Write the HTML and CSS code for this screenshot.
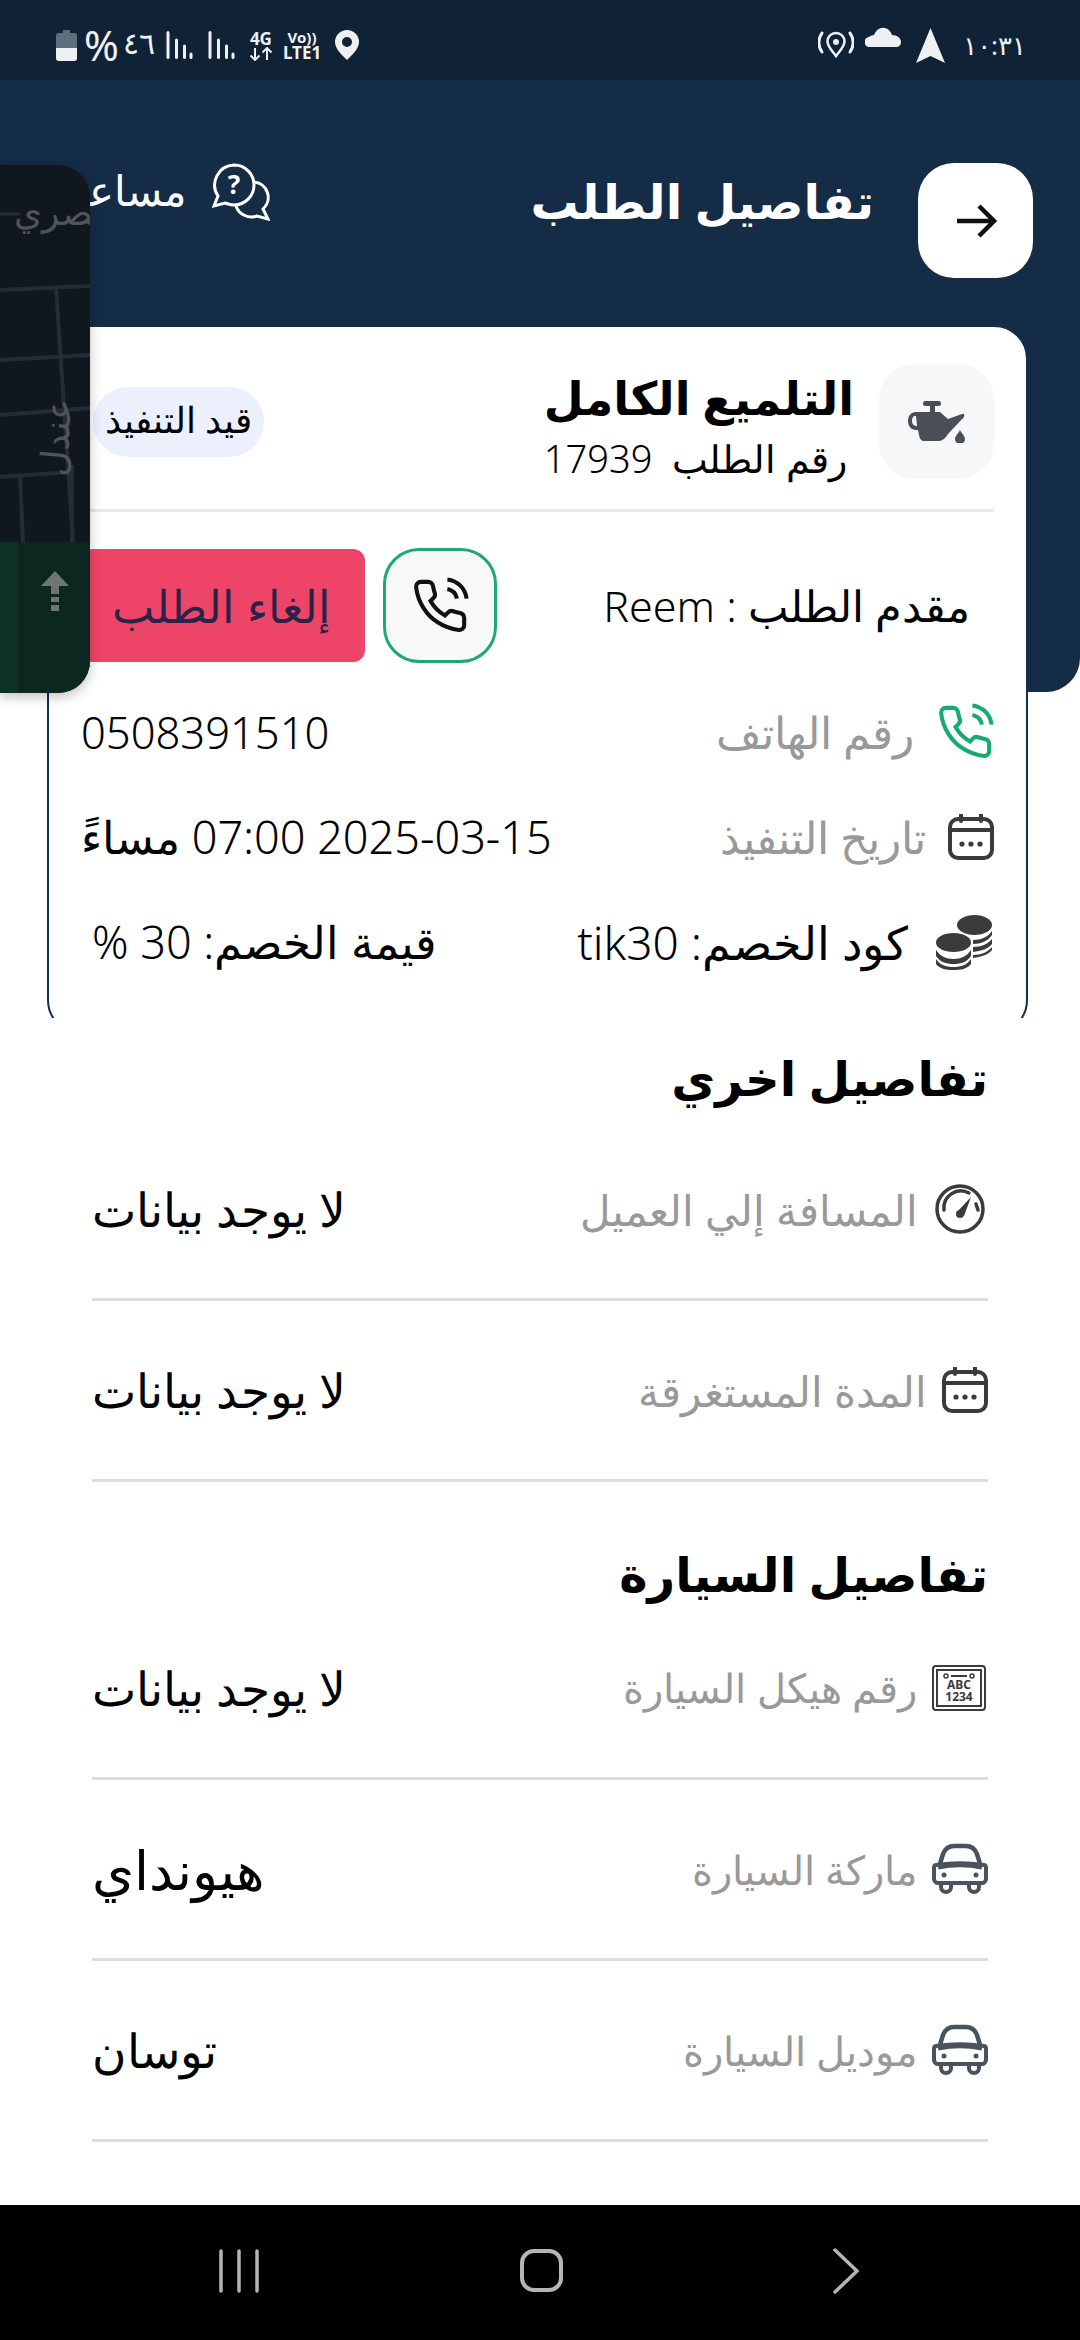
FILE: index.html
```html
<!DOCTYPE html>
<html lang="ar" dir="rtl">
<head>
    <meta charset="utf-8">
    <title>تفاصيل الطلب</title>
    <link rel="stylesheet" href="styles.css">
</head>
<body>
    <svg class="defs" width="0" height="0">
        <symbol id="calendar" viewBox="0 0 46 46">
            <path d="M13 1v6M33 1v6" fill="none" stroke="currentColor" stroke-width="4" stroke-linecap="round"/>
            <rect x="2" y="5" width="42" height="39" rx="8" fill="none" stroke="currentColor" stroke-width="4"/>
            <path d="M2 16h42" stroke="currentColor" stroke-width="4"/>
            <circle cx="14" cy="30" r="2.6" fill="currentColor"/>
            <circle cx="23" cy="30" r="2.6" fill="currentColor"/>
            <circle cx="32" cy="30" r="2.6" fill="currentColor"/>
        </symbol>
        <symbol id="car" viewBox="0 0 56 52">
            <path d="M7 24l4-13c2-5 6-8 11-8h12c5 0 9 3 11 8l4 13" fill="none" stroke="currentColor" stroke-width="4.5"/>
            <path d="M4 22c-1 0-2 1-2 3v11c0 2 2 4 4 4h44c2 0 4-2 4-4V25c0-2-1-3-2-3-14-2-34-2-48 0z" fill="none" stroke="currentColor" stroke-width="4"/>
            <path d="M6 24c14-3 30-3 44 0" fill="none" stroke="currentColor" stroke-width="5"/>
            <path d="M9 40v4a5 5 0 0 0 10 0v-4M37 40v4a5 5 0 0 0 10 0v-4" fill="none" stroke="currentColor" stroke-width="4"/>
            <circle cx="12" cy="32" r="2.5" fill="currentColor"/>
            <circle cx="44" cy="32" r="2.5" fill="currentColor"/>
        </symbol>
        <symbol id="signal" viewBox="0 0 27 28">
            <path d="M2 1.500v25M10.500 9v17.500M18.500 15v11.500M25 23v3.500" fill="none" stroke="currentColor" stroke-width="3" stroke-linecap="round"/>
        </symbol>
    </svg>

    <div class="screen">
        <div class="status-bar" dir="ltr">
            <div class="status-group">
                <svg class="st-battery" width="21" height="31" viewBox="0 0 21 31">
                    <path d="M7 0h7v3h4a3 3 0 0 1 3 3v22a3 3 0 0 1-3 3H3a3 3 0 0 1-3-3V6a3 3 0 0 1 3-3h4z" fill="#5f6e7c"/>
                    <path d="M0 18h21v10a3 3 0 0 1-3 3H3a3 3 0 0 1-3-3z" fill="#eef0f2"/>
                </svg>
                <span class="st-percent">%</span>
                <span class="st-level">٤٦</span>
                <svg class="st-signal" width="27" height="28"><use href="#signal"/></svg>
                <svg class="st-signal st-signal-two" width="27" height="28"><use href="#signal"/></svg>
                <span class="st-net">
                    <span class="st-net-top">4G</span>
                    <svg width="24" height="14" viewBox="0 0 24 14"><path d="M6 1v12M1.500 8.500L6 13l4.500-4.500M18 13V1M13.500 5.500L18 1l4.500 4.500" fill="none" stroke="currentColor" stroke-width="2"/></svg>
                </span>
                <span class="st-volte">
                    <span class="st-volte-top">Vo))</span>
                    <span class="st-volte-bottom">LTE1</span>
                </span>
                <svg class="st-pin" width="24" height="30" viewBox="0 0 24 30">
                    <path fill-rule="evenodd" d="M12 0a12 12 0 0 1 12 12c0 7-7 13-12 18C7 25 0 19 0 12A12 12 0 0 1 12 0zm0 7a5 5 0 1 0 0 10 5 5 0 0 0 0-10z" fill="#eef0f2"/>
                </svg>
            </div>
            <div class="status-group">
                <svg width="36" height="28" viewBox="0 0 36 28">
                    <path d="M18 2a8.500 8.500 0 0 1 8.500 8.500c0 5-4.500 9-8.500 14.500-4-5.500-8.500-9.500-8.500-14.500A8.500 8.500 0 0 1 18 2z" fill="none" stroke="#eef0f2" stroke-width="2.500"/>
                    <circle cx="18" cy="11" r="3" fill="#eef0f2"/>
                    <path d="M4 2c-4 6-4 13 0 19M32 2c4 6 4 13 0 19" fill="none" stroke="#eef0f2" stroke-width="3" stroke-linecap="round"/>
                </svg>
                <svg class="st-cloud" width="36" height="20" viewBox="0 0 36 20">
                    <path d="M5 20a5 5 0 0 1-1-10c1-1 3-2 5-2 2-5 6-8 11-7 4 1 6 4 7 7 5 0 9 3 9 7 0 3-2 5-5 5z" fill="#eef0f2"/>
                </svg>
                <svg class="st-nav" width="29" height="35" viewBox="0 0 29 35">
                    <path d="M14.500 0L29 35 14.500 28 0 35z" fill="#eef0f2"/>
                </svg>
                <span class="st-time">١٠:٣١</span>
            </div>
        </div>

        <header class="top-header">
            <div class="back-btn">
                <svg width="42" height="36" viewBox="0 0 42 36"><path d="M2 18h36M24 3l15 15-15 15" fill="none" stroke="#111" stroke-width="4.500"/></svg>
            </div>
            <h1 class="page-title">تفاصيل الطلب</h1>
            <div class="help">
                <svg class="help-icon" width="58" height="58" viewBox="0 0 58 58">
                    <path d="M22 2a20 20 0 0 1 0 40c-3 0-6-1-9-2l-11 3 4-10A20 20 0 0 1 22 2z" fill="none" stroke="#fff" stroke-width="3"/>
                    <path d="M42 19a15.500 15.500 0 0 1 9 27l5 10-11-3c-8 3-18-1-21-10" fill="none" stroke="#fff" stroke-width="3"/>
                    <text x="22" y="31" class="help-mark">?</text>
                </svg>
                <span class="help-text">مساعدة</span>
            </div>
        </header>

        <div class="card-clip">
            <section class="card">
                <div class="service">
                    <div class="icon-box">
                        <svg width="58" height="42" viewBox="0 0 58 42" fill="#4a4f57">
                            <rect x="15" y="0" width="18" height="5" rx="2.500"/>
                            <rect x="22" y="4" width="5" height="8"/>
                            <path fill-rule="evenodd" d="M8 11H32L40 18 54 13Q57 12 56 16L40 33Q36 40 31 40H16Q12 40 11 34L10 29H8C3 29 0 25 0 20 0 15 3 11 8 11ZM7 15C5 15 4 17 4 20 4 23 6 25 9 25L8 15Z"/>
                            <path d="M52 29c2 4 5 6 5 9a5 5 0 0 1-10 0c0-3 3-5 5-9z"/>
                        </svg>
                    </div>
                    <div class="service-info">
                        <h2 class="service-name">التلميع الكامل</h2>
                        <p class="service-no">رقم الطلب&nbsp;&nbsp;17939</p>
                    </div>
                    <span class="badge">قيد التنفيذ</span>
                </div>

                <div class="requester">
                    <span class="requester-name">مقدم الطلب : Reem</span>
                    <div class="call-btn">
                        <svg width="58" height="58" viewBox="0 0 24 24" fill="none" stroke="#111" stroke-width="1.700">
                            <path d="M15.050 5A5 5 0 0 1 19 8.950M15.050 1A9 9 0 0 1 23 8.940m-1 7.980v3a2 2 0 0 1-2.180 2 19.790 19.790 0 0 1-8.630-3.070 19.500 19.500 0 0 1-6-6 19.790 19.790 0 0 1-3.070-8.670A2 2 0 0 1 4.110 2h3a2 2 0 0 1 2 1.720 12.840 12.840 0 0 0 .7 2.810 2 2 0 0 1-.45 2.110L8.090 9.910a16 16 0 0 0 6 6l1.270-1.270a2 2 0 0 1 2.110-.45 12.840 12.840 0 0 0 2.810.7A2 2 0 0 1 22 16.920z"/>
                        </svg>
                    </div>
                    <div class="cancel-btn">إلغاء الطلب</div>
                </div>

                <div class="info-row info-row-first">
                    <div class="info-label">
                        <svg width="58" height="58" viewBox="0 0 24 24" fill="none" stroke="#17ab6f" stroke-width="1.700">
                            <path d="M15.050 5A5 5 0 0 1 19 8.950M15.050 1A9 9 0 0 1 23 8.940m-1 7.980v3a2 2 0 0 1-2.180 2 19.790 19.790 0 0 1-8.630-3.070 19.500 19.500 0 0 1-6-6 19.790 19.790 0 0 1-3.070-8.670A2 2 0 0 1 4.110 2h3a2 2 0 0 1 2 1.720 12.840 12.840 0 0 0 .7 2.810 2 2 0 0 1-.45 2.110L8.090 9.910a16 16 0 0 0 6 6l1.270-1.270a2 2 0 0 1 2.110-.45 12.840 12.840 0 0 0 2.810.7A2 2 0 0 1 22 16.920z"/>
                        </svg>
                        <span class="label-text">رقم الهاتف</span>
                    </div>
                    <span class="value-text value-phone">0508391510</span>
                </div>
                <div class="info-row">
                    <div class="info-label">
                        <svg class="ic-dark" width="46" height="46"><use href="#calendar"/></svg>
                        <span class="label-text">تاريخ التنفيذ</span>
                    </div>
                    <span class="value-text">2025-03-15 07:00 مساءً</span>
                </div>
                <div class="info-row">
                    <div class="info-label">
                        <svg width="58" height="56" viewBox="0 0 58 56" fill="#3b3b3d">
                            <ellipse cx="38.500" cy="11" rx="17.500" ry="10"/>
                            <path d="M37 26C45 26 52 23 56 17V21C52 27 45 30 37 30ZM37 33C45 33 52 30 56 25V30C52 35 45 37 37 38ZM37 41C45 41 52 38 56 33V36C52 41 45 43 37 44Z"/>
                            <ellipse cx="17.500" cy="28.500" rx="17.500" ry="9.500"/>
                            <path d="M0 36C4 42 10 45 17.500 45S31 42 35 36V42C31 48 25 50 17.500 50S4 48 0 42ZM0 45C4 51 10 53 17.500 53S31 51 35 45V50C31 55 25 56 17.500 56S4 55 0 50Z"/>
                        </svg>
                        <span class="plain-text">كود الخصم: tik30</span>
                    </div>
                    <span class="value-text value-indent">قيمة الخصم: 30 %</span>
                </div>
            </section>
        </div>

        <main class="details">
            <h3 class="section-title">تفاصيل اخري</h3>
            <div class="detail-row">
                <div class="info-label">
                    <svg class="ic-dark ic-gauge" width="50" height="50" viewBox="0 0 50 50" fill="none" stroke="currentColor">
                        <circle cx="25" cy="25" r="23" stroke-width="3.500"/>
                        <path d="M9 26A17 17 0 0 1 34 9M41 20l2 6" stroke-width="3.500" stroke-linecap="round"/>
                        <path d="M22 28L36 13 29 32Z" fill="currentColor" stroke="none"/>
                        <circle cx="25" cy="30" r="4" fill="currentColor" stroke="none"/>
                    </svg>
                    <span class="label-text">المسافة إلي العميل</span>
                </div>
                <span class="detail-value">لا يوجد بيانات</span>
            </div>
            <div class="detail-row">
                <div class="info-label">
                    <svg class="ic-dark" width="46" height="46"><use href="#calendar"/></svg>
                    <span class="label-text">المدة المستغرقة</span>
                </div>
                <span class="detail-value">لا يوجد بيانات</span>
            </div>

            <h3 class="section-title section-car">تفاصيل السيارة</h3>
            <div class="detail-row row-chassis">
                <div class="info-label">
                    <svg class="ic-dark ic-plate" width="54" height="46" viewBox="0 0 54 46" fill="none" stroke="currentColor">
                        <rect x="1" y="1" width="52" height="44" rx="3" stroke-width="2"/>
                        <rect x="5" y="5" width="44" height="36" stroke-width="2"/>
                        <circle cx="14" cy="11" r="2" stroke-width="1.500"/>
                        <circle cx="40" cy="11" r="2" stroke-width="1.500"/>
                        <path d="M19 11h16" stroke-width="2"/>
                        <text x="27" y="24" class="plate-text">ABC</text>
                        <text x="27" y="36" class="plate-text">1234</text>
                    </svg>
                    <span class="label-text label-small">رقم هيكل السيارة</span>
                </div>
                <span class="detail-value">لا يوجد بيانات</span>
            </div>
            <div class="detail-row">
                <div class="info-label">
                    <svg class="ic-car" width="56" height="52"><use href="#car"/></svg>
                    <span class="label-text label-small">ماركة السيارة</span>
                </div>
                <span class="detail-value value-wide">هيونداي</span>
            </div>
            <div class="detail-row">
                <div class="info-label">
                    <svg class="ic-car" width="56" height="52"><use href="#car"/></svg>
                    <span class="label-text label-small">موديل السيارة</span>
                </div>
                <span class="detail-value">توسان</span>
            </div>
        </main>

        <nav class="nav-bar" dir="ltr">
            <svg width="42" height="44" viewBox="0 0 42 44"><path d="M3 2v40M21 2v40M39 2v40" stroke="#b5b5b5" stroke-width="3.500" stroke-linecap="round"/></svg>
            <div class="nav-home"></div>
            <svg width="26" height="46" viewBox="0 0 26 46"><path d="M2 2l22 21L2 44" fill="none" stroke="#b5b5b5" stroke-width="3.500" stroke-linecap="round"/></svg>
        </nav>

        <!-- floating map window on top of the page -->
        <aside class="map-window">
            <svg class="map-canvas" width="90" height="377" viewBox="0 0 90 377" fill="none" stroke="#262c35">
                <path d="M0 49h20" stroke-width="3"/>
                <path d="M0 125l90-4M0 195l90-5M0 250l90-7M0 312l70-5" stroke-width="4"/>
                <path d="M56 122l17 255M20 310l3 67M72 300v77" stroke-width="4"/>
                <text x="112" y="60" class="map-label">مصري</text>
                <text class="map-label" transform="translate(72 235) rotate(-85)">عندل</text>
            </svg>
            <div class="map-guide">
                <svg width="30" height="42" viewBox="0 0 30 42" fill="#6f7571">
                    <path d="M15 0l14 15h-10v8h-8v-8H1z"/>
                    <rect x="11" y="26" width="8" height="5"/>
                    <rect x="11" y="34" width="8" height="6"/>
                </svg>
            </div>
        </aside>
    </div>
</body>
</html>
```

FILE: styles.css
```css
* {
    box-sizing: border-box;
}
html, body {
    margin: 0;
    padding: 0;
}
body {
    width: 1080px;
    height: 2340px;
    overflow: hidden;
    background-color: #fff;
    font-family: "Noto Sans", "Open Sans", "DejaVu Sans", sans-serif;
    font-weight: 300;
    color: #000;
}
h1, h2, h3, p {
    margin: 0;
}
.defs {
    position: absolute;
}
.screen {
    position: relative;
    width: 1080px;
    height: 2340px;
    display: flex;
    flex-direction: column;
}

/* status bar */
.status-bar {
    height: 80px;
    padding: 10px 54px 0 56px;
    background-color: #102336;
    color: #eef0f2;
    font-weight: 400;
    display: flex;
    justify-content: space-between;
    align-items: center;
    flex-shrink: 0;
}
.status-group {
    display: flex;
    align-items: center;
}
.st-percent {
    margin-left: 7px;
    font-size: 42px;
    line-height: 44px;
}
.st-level {
    margin-left: 4px;
    width: 28px;
    font-size: 30px;
    line-height: 30px;
    margin-top: -4px;
}
.st-signal {
    margin-left: 15px;
}
.st-net {
    margin-left: 14px;
    display: flex;
    flex-direction: column;
    align-items: center;
    font-size: 17px;
    line-height: 17px;
    font-weight: 700;
}
.st-volte {
    margin-left: 10px;
    display: flex;
    flex-direction: column;
    align-items: center;
    font-weight: 700;
    line-height: 16px;
}
.st-volte-top {
    font-size: 15px;
}
.st-volte-bottom {
    font-size: 17px;
}
.st-pin {
    margin-left: 14px;
}
.st-cloud {
    margin-left: 11px;
    margin-top: -16px;
}
.st-nav {
    margin-left: 15px;
}
.st-time {
    margin-left: 18px;
    font-size: 26px;
    line-height: 30px;
    letter-spacing: 2px;
}

/* header */
.top-header {
    height: 612px;
    flex-shrink: 0;
    padding: 83px 47px 0 0;
    background-color: #152c47;
    border-bottom-right-radius: 34px;
    border-bottom-left-radius: 34px;
    color: #fff;
    display: flex;
    align-items: flex-start;
}
.back-btn {
    width: 115px;
    height: 115px;
    border-radius: 36px;
    background-color: #fff;
    display: flex;
    align-items: center;
    justify-content: center;
}
.page-title {
    margin-right: 44px;
    margin-top: 5px;
    font-size: 48px;
    line-height: 66px;
    font-weight: 700;
}
.help {
    margin-right: auto;
    width: 270px;
    display: flex;
    align-items: flex-start;
    gap: 25px;
    overflow: hidden;
}
.help-icon {
    flex-shrink: 0;
}
.help-mark {
    font-size: 26px;
    font-weight: 700;
    fill: #fff;
    text-anchor: middle;
}
.help-text {
    font-size: 42px;
    line-height: 54px;
    font-weight: 300;
    white-space: nowrap;
}

/* order card */
.card-clip {
    margin: -367px 52px 0 47px;
    height: 693px;
    overflow: hidden;
    flex-shrink: 0;
    position: relative;
}
.card {
    height: 709px;
    padding: 37px 32px 0;
    background-color: #fff;
    border: 2px solid #162e4b;
    border-radius: 34px;
}
.service {
    height: 148px;
    padding-bottom: 31px;
    border-bottom: 3px solid #e9e9e9;
    display: flex;
    align-items: flex-start;
}
.icon-box {
    width: 115px;
    height: 115px;
    border-radius: 36px;
    background-color: #f6f7f9;
    display: flex;
    align-items: center;
    justify-content: center;
    flex-shrink: 0;
}
.service-info {
    margin-right: 25px;
}
.service-name {
    font-size: 46px;
    line-height: 56px;
    font-weight: 700;
    margin-top: 5px;
}
.service-no {
    margin-top: 8px;
    margin-right: 7px;
    font-size: 38px;
    line-height: 50px;
}
.badge {
    margin: 23px auto 0 12px;
    height: 70px;
    width: 171px;
    border-radius: 35px;
    background-color: #ecf0fd;
    font-size: 36px;
    line-height: 66px;
    text-align: center;
    white-space: nowrap;
}
.requester {
    margin-top: 36px;
    height: 115px;
    padding-right: 24px;
    display: flex;
    align-items: center;
}
.requester-name {
    font-size: 43px;
    margin-left: auto;
}
.call-btn {
    width: 114px;
    height: 115px;
    border: 3px solid #1fa870;
    border-radius: 36px;
    background-color: #f6f8fa;
    display: flex;
    align-items: center;
    justify-content: center;
}
.cancel-btn {
    margin-right: 18px;
    width: 284px;
    height: 113px;
    border-radius: 12px;
    background-color: #ee4468;
    color: #2a2349;
    font-size: 45px;
    line-height: 113px;
    padding-right: 34px;
}
.info-row {
    height: 105px;
    display: flex;
    justify-content: space-between;
    align-items: center;
}
.info-row-first {
    margin-top: 16px;
}
.info-label {
    display: flex;
    align-items: center;
}
.label-text {
    margin-right: 22px;
    font-size: 43.5px;
    color: #999;
}
.plain-text {
    margin-right: 28px;
    font-size: 46px;
}
.value-text {
    font-size: 45px;
}
.value-phone {
    font-size: 43.5px;
}
.value-indent {
    margin-left: 11px;
}
.ic-dark {
    color: #3b3b3d;
}
.ic-car {
    color: #4a525c;
}

/* details */
.details {
    padding: 0 92px;
    flex: 1;
}
.section-title {
    margin-top: 24px;
    margin-bottom: 6px;
    font-size: 48px;
    line-height: 72px;
    font-weight: 700;
}
.section-car {
    margin-top: 56px;
    margin-bottom: 0;
}
.detail-row {
    height: 181px;
    border-bottom: 3px solid #ddd;
    display: flex;
    justify-content: space-between;
    align-items: center;
}
.row-chassis {
    height: 170px;
    padding-bottom: 12px;
}
.details .label-text {
    margin-right: 15px;
    font-size: 42px;
}
.details .label-small {
    font-size: 40px;
}
.ic-gauge {
    margin-right: 3px;
    margin-left: 2px;
}
.ic-plate {
    margin-right: 2px;
}
.detail-value {
    font-size: 47px;
}
.value-wide {
    font-size: 54px;
}
.plate-text {
    font-size: 12px;
    font-weight: 700;
    fill: currentColor;
    stroke: none;
    text-anchor: middle;
}

/* navigation bar */
.nav-bar {
    height: 135px;
    flex-shrink: 0;
    background-color: #000;
    padding: 0 221px 4px 218px;
    display: flex;
    justify-content: space-between;
    align-items: center;
}
.nav-home {
    margin-right: 10px;
    width: 43px;
    height: 43px;
    border: 4px solid #b5b5b5;
    border-radius: 14px;
}

/* floating map */
.map-window {
    position: absolute;
    left: 0;
    top: 165px;
    width: 90px;
    height: 528px;
    border-radius: 0 32px 32px 0;
    background-color: #11171f;
    box-shadow: 0 4px 12px rgba(0, 0, 0, 0.25);
    overflow: hidden;
}
.map-canvas {
    display: block;
}
.map-label {
    font-size: 36px;
    fill: #50545a;
    stroke: none;
}
.map-guide {
    height: 151px;
    padding: 29px 0 0 40px;
    background: linear-gradient(to right, #0c3226 18px, #0b2720 18px);
    direction: ltr;
}
```
